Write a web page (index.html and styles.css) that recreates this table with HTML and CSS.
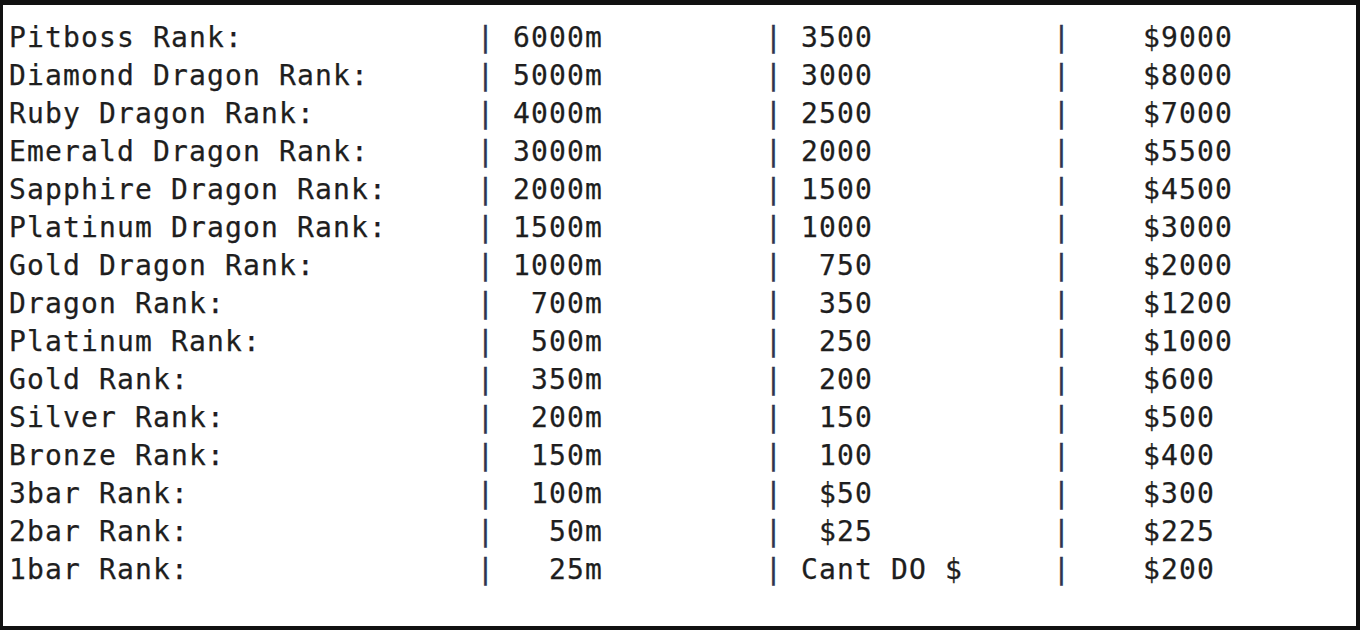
FILE: index.html
```html
<!DOCTYPE html>
<html lang="en">
<head>
<meta charset="utf-8">
<title>Rank Table</title>
<link rel="stylesheet" href="styles.css">
</head>
<body>
<div class="frame">
  <div class="ranks">
    <div class="row"><span class="c">Pitboss Rank:</span><span class="c"><span class="bar">|</span> 6000m</span><span class="c"><span class="bar">|</span> 3500</span><span class="c"><span class="bar">|</span>    $9000</span></div>
    <div class="row"><span class="c">Diamond Dragon Rank:</span><span class="c"><span class="bar">|</span> 5000m</span><span class="c"><span class="bar">|</span> 3000</span><span class="c"><span class="bar">|</span>    $8000</span></div>
    <div class="row"><span class="c">Ruby Dragon Rank:</span><span class="c"><span class="bar">|</span> 4000m</span><span class="c"><span class="bar">|</span> 2500</span><span class="c"><span class="bar">|</span>    $7000</span></div>
    <div class="row"><span class="c">Emerald Dragon Rank:</span><span class="c"><span class="bar">|</span> 3000m</span><span class="c"><span class="bar">|</span> 2000</span><span class="c"><span class="bar">|</span>    $5500</span></div>
    <div class="row"><span class="c">Sapphire Dragon Rank:</span><span class="c"><span class="bar">|</span> 2000m</span><span class="c"><span class="bar">|</span> 1500</span><span class="c"><span class="bar">|</span>    $4500</span></div>
    <div class="row"><span class="c">Platinum Dragon Rank:</span><span class="c"><span class="bar">|</span> 1500m</span><span class="c"><span class="bar">|</span> 1000</span><span class="c"><span class="bar">|</span>    $3000</span></div>
    <div class="row"><span class="c">Gold Dragon Rank:</span><span class="c"><span class="bar">|</span> 1000m</span><span class="c"><span class="bar">|</span>  750</span><span class="c"><span class="bar">|</span>    $2000</span></div>
    <div class="row"><span class="c">Dragon Rank:</span><span class="c"><span class="bar">|</span>  700m</span><span class="c"><span class="bar">|</span>  350</span><span class="c"><span class="bar">|</span>    $1200</span></div>
    <div class="row"><span class="c">Platinum Rank:</span><span class="c"><span class="bar">|</span>  500m</span><span class="c"><span class="bar">|</span>  250</span><span class="c"><span class="bar">|</span>    $1000</span></div>
    <div class="row"><span class="c">Gold Rank:</span><span class="c"><span class="bar">|</span>  350m</span><span class="c"><span class="bar">|</span>  200</span><span class="c"><span class="bar">|</span>    $600</span></div>
    <div class="row"><span class="c">Silver Rank:</span><span class="c"><span class="bar">|</span>  200m</span><span class="c"><span class="bar">|</span>  150</span><span class="c"><span class="bar">|</span>    $500</span></div>
    <div class="row"><span class="c">Bronze Rank:</span><span class="c"><span class="bar">|</span>  150m</span><span class="c"><span class="bar">|</span>  100</span><span class="c"><span class="bar">|</span>    $400</span></div>
    <div class="row"><span class="c">3bar Rank:</span><span class="c"><span class="bar">|</span>  100m</span><span class="c"><span class="bar">|</span>  $50</span><span class="c"><span class="bar">|</span>    $300</span></div>
    <div class="row"><span class="c">2bar Rank:</span><span class="c"><span class="bar">|</span>   50m</span><span class="c"><span class="bar">|</span>  $25</span><span class="c"><span class="bar">|</span>    $225</span></div>
    <div class="row"><span class="c">1bar Rank:</span><span class="c"><span class="bar">|</span>   25m</span><span class="c"><span class="bar">|</span> Cant DO $</span><span class="c"><span class="bar">|</span>    $200</span></div>
  </div>
</div>
</body>
</html>
```

FILE: styles.css
```css
html, body {
  margin: 0;
  padding: 0;
  background: #ffffff;
}

.frame {
  box-sizing: border-box;
  width: 1360px;
  height: 630px;
  border-style: solid;
  border-color: #111111;
  border-width: 5px 4px 4px 3px;
  background: #ffffff;
  padding: 14px 0 0 6px;
}

.ranks {
  font-family: "DejaVu Sans Mono", "Liberation Mono", monospace;
  font-size: 28px;
  letter-spacing: 1.14px;
  line-height: 38px;
  color: #1e1e1e;
  -webkit-text-stroke: 0.25px #1e1e1e;
}

.row {
  display: grid;
  grid-template-columns: 468px 288px 288px 1fr;
}

.c {
  white-space: pre;
}

.bar {
  color: #2e3350;
  -webkit-text-stroke: 0.4px #2e3350;
}
```
